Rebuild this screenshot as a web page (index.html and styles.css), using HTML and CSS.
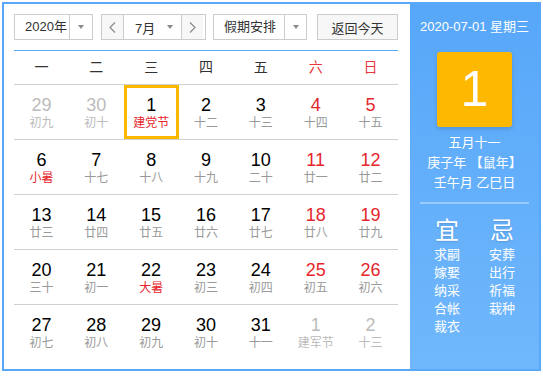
FILE: index.html
```html
<!DOCTYPE html>
<html lang="zh-CN">
<head>
  <meta charset="UTF-8">
  <title>万年历</title>
  <link rel="stylesheet" href="styles.css">
</head>
<body>

  <div class="calendar">
    <div class="main">

      <!-- 工具栏 -->
      <div class="toolbar">
        <div class="select year">
          <span class="value">2020年</span>
          <span class="arrow"><i class="caret"></i></span>
        </div>
        <div class="month-picker">
          <span class="nav">
            <svg width="7" height="11" viewBox="0 0 7 11"><polyline points="6,0.5 1,5.5 6,10.5" fill="none" stroke="#8a8a8a" stroke-width="1.2"/></svg>
          </span>
          <span class="month">
            <span class="value">7月</span>
            <i class="caret"></i>
          </span>
          <span class="nav">
            <svg width="7" height="11" viewBox="0 0 7 11"><polyline points="1,0.5 6,5.5 1,10.5" fill="none" stroke="#8a8a8a" stroke-width="1.2"/></svg>
          </span>
        </div>
        <div class="select holiday">
          <span class="value">假期安排</span>
          <span class="arrow"><i class="caret"></i></span>
        </div>
        <div class="today">返回今天</div>
      </div>

      <div class="weekdays">
        <span>一</span><span>二</span><span>三</span><span>四</span><span>五</span>
        <span class="weekend">六</span><span class="weekend">日</span>
      </div>

      <div class="week">
        <div class="day other"><span class="num">29</span><span class="lunar">初九</span></div>
        <div class="day other"><span class="num">30</span><span class="lunar">初十</span></div>
        <div class="day selected"><span class="num">1</span><span class="lunar festival">建党节</span></div>
        <div class="day"><span class="num">2</span><span class="lunar">十二</span></div>
        <div class="day"><span class="num">3</span><span class="lunar">十三</span></div>
        <div class="day weekend"><span class="num">4</span><span class="lunar">十四</span></div>
        <div class="day weekend"><span class="num">5</span><span class="lunar">十五</span></div>
      </div>
      <div class="week">
        <div class="day"><span class="num">6</span><span class="lunar festival">小暑</span></div>
        <div class="day"><span class="num">7</span><span class="lunar">十七</span></div>
        <div class="day"><span class="num">8</span><span class="lunar">十八</span></div>
        <div class="day"><span class="num">9</span><span class="lunar">十九</span></div>
        <div class="day"><span class="num">10</span><span class="lunar">二十</span></div>
        <div class="day weekend"><span class="num">11</span><span class="lunar">廿一</span></div>
        <div class="day weekend"><span class="num">12</span><span class="lunar">廿二</span></div>
      </div>
      <div class="week">
        <div class="day"><span class="num">13</span><span class="lunar">廿三</span></div>
        <div class="day"><span class="num">14</span><span class="lunar">廿四</span></div>
        <div class="day"><span class="num">15</span><span class="lunar">廿五</span></div>
        <div class="day"><span class="num">16</span><span class="lunar">廿六</span></div>
        <div class="day"><span class="num">17</span><span class="lunar">廿七</span></div>
        <div class="day weekend"><span class="num">18</span><span class="lunar">廿八</span></div>
        <div class="day weekend"><span class="num">19</span><span class="lunar">廿九</span></div>
      </div>
      <div class="week">
        <div class="day"><span class="num">20</span><span class="lunar">三十</span></div>
        <div class="day"><span class="num">21</span><span class="lunar">初一</span></div>
        <div class="day"><span class="num">22</span><span class="lunar festival">大暑</span></div>
        <div class="day"><span class="num">23</span><span class="lunar">初三</span></div>
        <div class="day"><span class="num">24</span><span class="lunar">初四</span></div>
        <div class="day weekend"><span class="num">25</span><span class="lunar">初五</span></div>
        <div class="day weekend"><span class="num">26</span><span class="lunar">初六</span></div>
      </div>
      <div class="week">
        <div class="day"><span class="num">27</span><span class="lunar">初七</span></div>
        <div class="day"><span class="num">28</span><span class="lunar">初八</span></div>
        <div class="day"><span class="num">29</span><span class="lunar">初九</span></div>
        <div class="day"><span class="num">30</span><span class="lunar">初十</span></div>
        <div class="day"><span class="num">31</span><span class="lunar">十一</span></div>
        <div class="day other"><span class="num">1</span><span class="lunar">建军节</span></div>
        <div class="day other"><span class="num">2</span><span class="lunar">十三</span></div>
      </div>

    </div>

    <!-- 右侧详情 -->
    <aside class="panel">
      <div class="panel-date">2020-07-01 星期三</div>
      <div class="big-day">1</div>
      <div class="lunar-info">
        <div>五月十一</div>
        <div>庚子年 【鼠年】</div>
        <div>壬午月 乙巳日</div>
      </div>
      <div class="divider"></div>
      <div class="advice">
        <div class="col">
          <h3>宜</h3>
          <ul>
            <li>求嗣</li><li>嫁娶</li><li>纳采</li><li>合帐</li><li>裁衣</li>
          </ul>
        </div>
        <div class="col">
          <h3>忌</h3>
          <ul>
            <li>安葬</li><li>出行</li><li>祈福</li><li>栽种</li>
          </ul>
        </div>
      </div>
    </aside>
  </div>

</body>
</html>
```

FILE: styles.css
```css
body {
  margin: 0;
  font-family: "Liberation Sans", "Noto Sans CJK SC", sans-serif;
}
.calendar {
  display: flex;
  width: 535px;
  height: 365px;
  margin: 2px;
  border: 2px solid #5aa8f8;
}
.main {
  width: 406px;
  padding: 10px 12px 10px 10px;
  box-sizing: border-box;
  background: #fff;
}

/* 工具栏 */
.toolbar {
  display: flex;
  height: 26px;
  margin-bottom: 10px;
  font-size: 13px;
  color: #333;
}
.select,
.month-picker,
.today {
  display: flex;
  align-items: center;
  height: 26px;
  box-sizing: border-box;
  border: 1px solid #ccc;
}
.select .value {
  flex: 1;
  padding-left: 10px;
  line-height: 24px;
}
.select .arrow {
  display: flex;
  align-items: center;
  justify-content: center;
  height: 100%;
  border-left: 1px solid #ccc;
}
.caret {
  display: inline-block;
  width: 0;
  height: 0;
  border-left: 3.5px solid transparent;
  border-right: 3.5px solid transparent;
  border-top: 4px solid #8a8a8a;
}
.year {
  width: 79px;
  margin-right: 8px;
}
.year .arrow {
  width: 22px;
}
.month-picker {
  width: 105px;
  margin-right: 7px;
}
.month-picker .nav {
  display: flex;
  align-items: center;
  justify-content: center;
  width: 21px;
  height: 100%;
  background: #f7f7f7;
}
.month-picker .month {
  display: flex;
  align-items: center;
  width: 59px;
  height: 100%;
  padding: 0 8px 0 11px;
  box-sizing: border-box;
  border-left: 1px solid #ccc;
  border-right: 1px solid #ccc;
}
.month-picker .month .value {
  flex: 1;
}
.holiday {
  width: 94px;
  margin-right: 10px;
}
.holiday .arrow {
  width: 21px;
}
.today {
  justify-content: center;
  width: 81px;
  background: #f7f7f7;
}

/* 日历 */
.weekdays {
  display: grid;
  grid-template-columns: repeat(7, 1fr);
  height: 34px;
  box-sizing: border-box;
  border-top: 1px solid #5aa8f8;
  font-size: 14px;
  line-height: 33px;
  text-align: center;
  color: #333;
}
.weekdays .weekend {
  color: #e8383d;
}
.week {
  display: grid;
  grid-template-columns: repeat(7, 1fr);
  height: 55px;
  box-sizing: border-box;
  border-top: 1px solid #d0d0d0;
}
.day {
  padding-top: 10px;
  box-sizing: border-box;
  text-align: center;
}
.day .num {
  display: block;
  font-size: 18px;
  line-height: 20px;
  color: #000;
}
.day .lunar {
  display: block;
  font-size: 12px;
  line-height: 17px;
  color: #999;
}
.day.weekend .num {
  color: #e5262c;
}
.day .lunar.festival {
  color: #e5262c;
}
.day.other .num,
.day.other .lunar {
  color: #bbb;
}
.day.selected {
  border: 3px solid #ffb800;
  padding-top: 7px;
}

/* 右侧详情 */
.panel {
  width: 129px;
  padding: 14px 10px 0;
  box-sizing: border-box;
  background: linear-gradient(#57a7f9, #70b7fc);
  color: #fff;
  text-align: center;
}
.panel-date {
  margin: 0 -10px;
  font-size: 13px;
  line-height: 18px;
  white-space: nowrap;
}
.big-day {
  width: 75px;
  height: 75px;
  margin: 16px auto 0;
  border-radius: 3px;
  background: #ffb800;
  box-shadow: 0 2px 4px rgba(0, 0, 0, 0.15);
  font-size: 50px;
  line-height: 75px;
}
.lunar-info {
  margin-top: 6px;
  font-size: 13px;
  line-height: 20px;
}
.divider {
  height: 2px;
  margin-top: 9px;
  background: rgba(255, 255, 255, 0.35);
}
.advice {
  display: grid;
  grid-template-columns: 55px 55px;
  justify-content: center;
  margin-top: 12px;
}
.advice h3 {
  margin: 0;
  font-size: 24px;
  font-weight: normal;
  line-height: 30px;
  text-shadow: 0 1px 2px rgba(0, 0, 0, 0.15);
}
.advice ul {
  margin: 0;
  padding: 0;
  list-style: none;
  font-size: 13px;
  line-height: 18px;
}
```
